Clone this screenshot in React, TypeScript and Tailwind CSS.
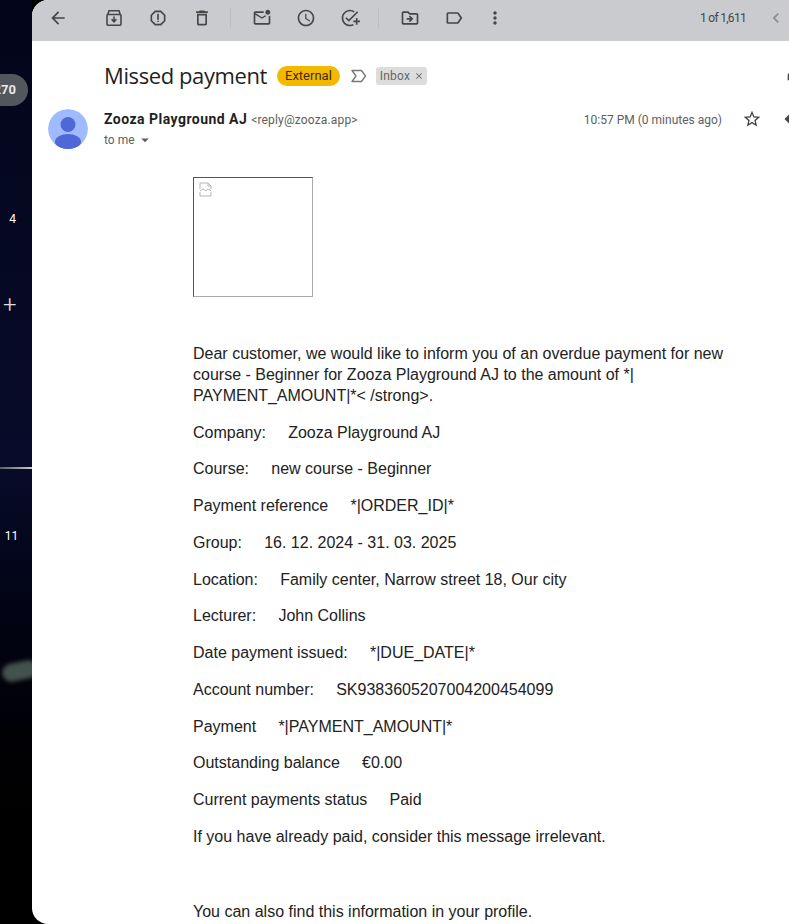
import React from "react";
import {
  MdArrowBack,
  MdOutlineReportGmailerrorred,
  MdOutlineDelete,
  MdOutlineMarkEmailUnread,
  MdAccessTime,
  MdOutlineAddTask,
  MdOutlineDriveFileMove,
  MdOutlineLabel,
  MdMoreVert,
  MdChevronLeft,
  MdStarBorder,
  MdReply,
  MdArrowDropDown,
  MdClose,
  MdOutlinePrint,
} from "react-icons/md";

const rows = [
  ["Company:", "Zooza Playground AJ"],
  ["Course:", "new course - Beginner"],
  ["Payment reference", "*|ORDER_ID|*"],
  ["Group:", "16. 12. 2024 - 31. 03. 2025"],
  ["Location:", "Family center, Narrow street 18, Our city"],
  ["Lecturer:", "John Collins"],
  ["Date payment issued:", "*|DUE_DATE|*"],
  ["Account number:", "SK9383605207004200454099"],
  ["Payment", "*|PAYMENT_AMOUNT|*"],
  ["Outstanding balance", "€0.00"],
  ["Current payments status", "Paid"],
];

const gap = "\u00a0\u00a0\u00a0\u00a0\u00a0";

function ArchiveIcon() {
  return (
    <svg width="20" height="20" viewBox="0 0 20 20" fill="none" stroke="#444746" strokeWidth="1.6">
      <path d="M3.8 6.5 5 2.8h10l1.2 3.7" />
      <rect x="3" y="6.5" width="14" height="10.7" rx="1" />
      <path d="M10 8.6v5M7.6 11.3 10 13.8l2.4-2.5" />
    </svg>
  );
}

function Sidebar() {
  return (
    <aside className="relative w-8 h-full shrink-0 overflow-hidden bg-gradient-to-b from-[#03051a] via-[#070c2a] to-[#000000] text-white font-['Roboto',sans-serif]">
      <div className="mt-[74px] ml-[-14px] w-[42px] h-8 rounded-r-2xl bg-[#53565d] flex items-center justify-end pr-3 text-[13px] font-bold text-[#e8e8e8]">
        270
      </div>
      <p className="mt-[105px] w-[25px] text-center text-xs leading-4">4</p>
      <div className="mt-[66px] ml-[3px] text-[24px] leading-6 font-light text-[#dddddd]">+</div>
      <p className="mt-[211px] w-[23px] text-center text-xs leading-4">11</p>
      <div className="absolute left-0 top-[467px] w-8 h-0.5 bg-gradient-to-r from-[#5a5d6c] to-[#c9ccd4]" />
      <div className="absolute left-[2px] top-[662px] w-[36px] h-[18px] -rotate-12 rounded-full bg-[#44524f] blur-[2px]" />
    </aside>
  );
}

function Toolbar() {
  return (
    <div className="h-[41px] pb-[6px] bg-[#c9cbce] flex items-center text-[#444746] shrink-0">
      <MdArrowBack size={20} className="ml-4" />
      <div className="ml-9"><ArchiveIcon /></div>
      <MdOutlineReportGmailerrorred size={20} className="ml-6" />
      <MdOutlineDelete size={20} className="ml-6" />
      <div className="ml-[18px] w-px h-5 bg-[#bcbec1]" />
      <MdOutlineMarkEmailUnread size={20} className="ml-[21px]" />
      <MdAccessTime size={20} className="ml-[24px]" />
      <MdOutlineAddTask size={20} className="ml-[24px]" />
      <div className="ml-[18px] w-px h-5 bg-[#bcbec1]" />
      <MdOutlineDriveFileMove size={20} className="ml-[21px]" />
      <MdOutlineLabel size={20} className="ml-[24px]" />
      <MdMoreVert size={20} className="ml-[21px]" />
      <span className="ml-auto text-xs tracking-[-0.7px] text-[#444746] font-['Roboto',sans-serif]">1 of 1,611</span>
      <MdChevronLeft size={20} className="ml-5 mr-[3px] shrink-0 text-[#8a8c8f]" />
    </div>
  );
}

function Header() {
  return (
    <div className="font-['Roboto',sans-serif]">
      <div className="flex items-center h-[30px] mt-[20px] pl-[72px]">
        <h1 className="text-[22px] leading-7 mb-[2px] text-[#1f1f1f] font-['Open_Sans',sans-serif] tracking-[-0.4px]">Missed payment</h1>
        <span className="ml-[10px] h-5 px-2 rounded-[10px] bg-[#f2b900] text-[13px] leading-5 text-[#3c2f00]">External</span>
        <svg className="ml-[11px]" width="16" height="14" viewBox="0 0 16 14" fill="none" stroke="#747775" strokeWidth="1.3">
          <path d="M1 1.5h9.5l4 5.5-4 5.5H1L5 7z" strokeLinejoin="round" />
        </svg>
        <span className="ml-[9px] h-[18px] pl-1 pr-[3px] rounded-[3px] bg-[#dddddd] text-xs tracking-[0.2px] leading-[18px] text-[#666666] flex items-center">
          Inbox
          <MdClose size={10} className="ml-1" />
        </span>
        <MdOutlinePrint size={20} className="ml-auto -mr-[17px] shrink-0 text-[#444746]" />
      </div>
      <div className="flex mt-[18px] pl-4">
        <svg width="40" height="40" viewBox="0 0 40 40" className="rounded-full shrink-0">
          <circle cx="20" cy="20" r="20" fill="#a0bbfd" />
          <circle cx="20" cy="15.5" r="7.5" fill="#4f68d8" />
          <ellipse cx="20" cy="33" rx="13" ry="8" fill="#4f68d8" />
        </svg>
        <div className="ml-4 flex-1 min-w-0">
          <div className="flex items-center h-5">
            <span className="text-sm font-bold text-[#1f1f1f] tracking-[0.47px]">Zooza Playground AJ</span>
            <span className="ml-1 mt-[2px] text-xs tracking-[0.15px] text-[#5e5e5e]">&lt;reply@zooza.app&gt;</span>
            <span className="ml-auto mt-[2px] text-xs text-[#5e5e5e]">10:57 PM (0 minutes ago)</span>
            <MdStarBorder size={20} className="ml-5 text-[#444746] shrink-0" />
            <MdReply size={20} className="ml-5 -mr-[13px] text-[#444746] shrink-0" />
          </div>
          <div className="flex items-center h-4 mt-[3px] text-xs text-[#5e5e5e]">
            to me
            <MdArrowDropDown size={18} className="ml-[1px]" />
          </div>
        </div>
      </div>
    </div>
  );
}

function BrokenImage() {
  return (
    <div className="w-[120px] h-[120px] box-border border border-t-[#555555] border-l-[#555555] border-r-[#aaaaaa] border-b-[#aaaaaa] pl-[5px] pt-[4px]">
      <svg width="14" height="15" viewBox="0 0 14 15" fill="none" stroke="#b5b5b5" strokeWidth="1">
        <path d="M1 7V1h8l3 3v3M1 10v4h11v-4" />
        <path d="M9 1v3h3M1 9l3-2 3 2 2-2 3 2" />
      </svg>
    </div>
  );
}

export default function App() {
  return (
    <div className="w-[789px] h-[924px] overflow-hidden flex bg-black">
      <Sidebar />
      <main className="flex-1 min-w-0 h-full bg-white rounded-l-2xl overflow-hidden flex flex-col">
        <Toolbar />
        <Header />
        <div className="pl-[161px] pr-10 mt-[28px] text-base text-[#222222] font-['Liberation_Sans',Arial,sans-serif]">
          <BrokenImage />
          <p className="mt-[46px] mb-[16.7px] leading-[21px]">
            Dear customer, we would like to inform you of an overdue payment for new course - Beginner for Zooza Playground AJ to the amount of *|
            <br />
            PAYMENT_AMOUNT|*&lt; /strong&gt;.
          </p>
          {rows.map(([label, value]) => (
            <p key={label} className="mb-4 leading-[20.75px] whitespace-nowrap">
              {label}
              {gap}
              {value}
            </p>
          ))}
          <p className="leading-[20.7px]">If you have already paid, consider this message irrelevant.</p>
          <p className="mt-[54px] leading-[20.7px]">You can also find this information in your profile.</p>
        </div>
      </main>
    </div>
  );
}
